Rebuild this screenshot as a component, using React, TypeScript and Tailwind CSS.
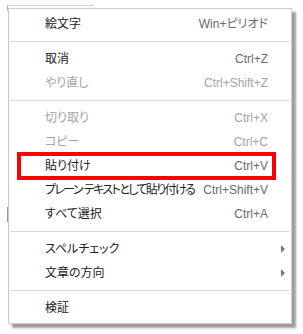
import React from "react";

type Item =
  | { type: "sep" }
  | { type: "item"; label: string; shortcut?: string; disabled?: boolean; submenu?: boolean; highlight?: boolean; tight?: boolean };

const items: Item[] = [
  { type: "item", label: "絵文字", shortcut: "Win+ピリオド" },
  { type: "sep" },
  { type: "item", label: "取消", shortcut: "Ctrl+Z" },
  { type: "item", label: "やり直し", shortcut: "Ctrl+Shift+Z", disabled: true },
  { type: "sep" },
  { type: "item", label: "切り取り", shortcut: "Ctrl+X", disabled: true },
  { type: "item", label: "コピー", shortcut: "Ctrl+C", disabled: true },
  { type: "item", label: "貼り付け", shortcut: "Ctrl+V", highlight: true },
  { type: "item", label: "プレーン テキストとして貼り付ける", shortcut: "Ctrl+Shift+V", tight: true },
  { type: "item", label: "すべて選択", shortcut: "Ctrl+A" },
  { type: "sep" },
  { type: "item", label: "スペルチェック", submenu: true },
  { type: "item", label: "文章の方向", submenu: true },
  { type: "sep" },
  { type: "item", label: "検証" },
];

export default function App() {
  return (
    <div
      className="relative w-[303px] h-[334px] bg-white overflow-hidden pl-[8px] pt-[8px] text-[12px] [font-feature-settings:'palt']"
      style={{ fontFamily: '"Liberation Sans", "Noto Sans CJK JP", sans-serif' }}
    >
      {/* page content peeking out behind the menu */}
      <div className="absolute left-[7px] top-[5px] w-[85px] border-t border-dotted border-[#b5b5b5]" />
      <div className="absolute left-[7px] top-[5px] w-px h-[6px] bg-[#b5b5b5]" />
      <div className="absolute left-[7px] top-[207px] w-px h-[15px] bg-[#9a9a9a]" />

      <div className="relative w-[284px] bg-white border border-[#cccccc] py-[3px] shadow-[4px_4px_2px_rgba(0,0,0,0.38)]">
        {items.map((it, i) =>
          it.type === "sep" ? (
            <div key={i} className="mx-px my-[5px] h-px bg-[#d9d9d9]" />
          ) : (
            <div key={i} className="relative flex items-center h-[24px] pl-[36px] pr-[23px] whitespace-nowrap">
              <span
                className={`${it.disabled ? "text-[#a3a3a3]" : "text-[#222222]"} ${it.tight ? "tracking-[-1.6px]" : ""}`}
              >
                {it.label}
              </span>
              <span className={`ml-auto ${it.disabled ? "text-[#a3a3a3]" : "text-[#6a6a6a]"}`}>{it.shortcut}</span>
              {it.submenu && (
                <span className="absolute right-[6px] top-[8px] w-0 h-0 border-y-[4px] border-y-transparent border-l-[4px] border-l-[#7a7a7a]" />
              )}
              {it.highlight && (
                <div className="absolute -top-[2px] -bottom-[2px] left-[8px] right-[15px] border-4 border-[#ff0000]" />
              )}
            </div>
          )
        )}
      </div>
    </div>
  );
}
